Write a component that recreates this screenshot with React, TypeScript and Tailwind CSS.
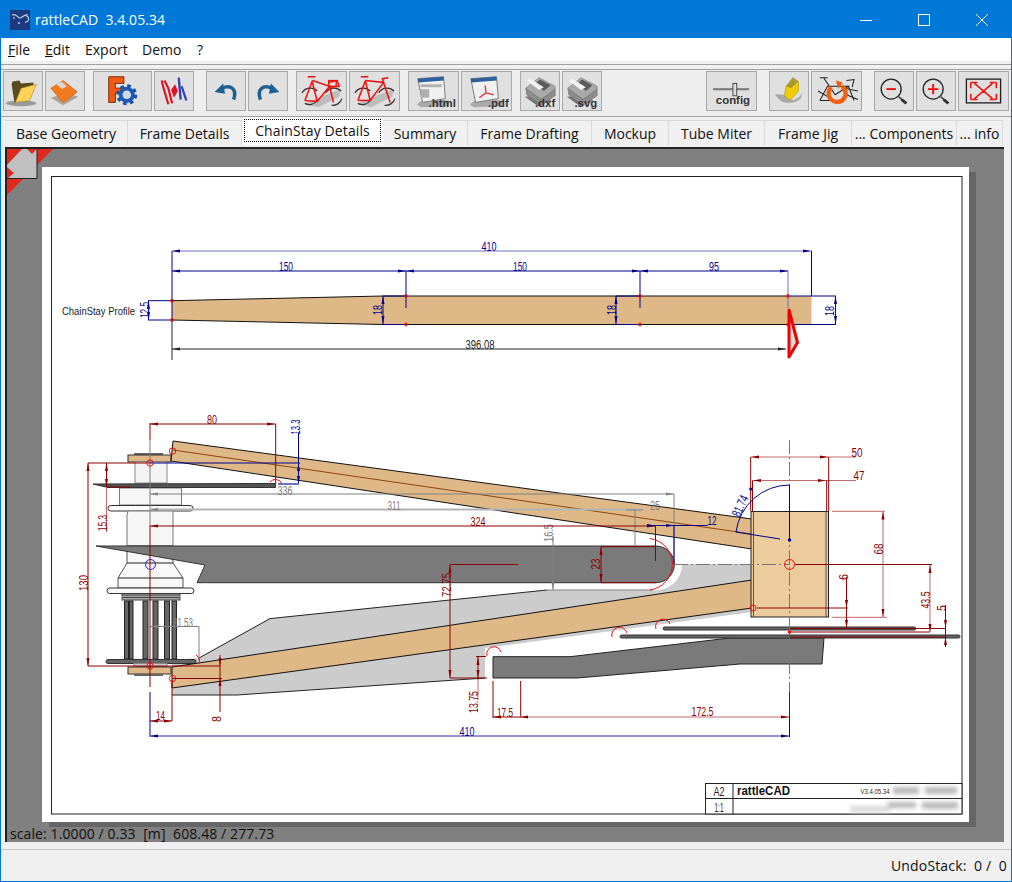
import React from 'react';

const NAVY = '#00008b';
const RED = '#8b0000';
const PALE = '#c06a6a';
const LILAC = '#7070c0';
const GRAY = '#808080';
const LIGHT = '#b4b4b4';
const TAN = '#deb887';
const DARK = '#7a7a7a';

// arrow head, tip at x,y, body running off in direction dx,dy
const ah = (x: number, y: number, dx: number, dy: number) => {
  const bx = x + dx * 8;
  const by = y + dy * 8;
  return `M${x} ${y}L${bx - dy * 1.5} ${by + dx * 1.5}L${bx + dy * 1.5} ${by - dx * 1.5}Z`;
};

function Ln({ d, c, w = 1 }: { d: string; c: string; w?: number }) {
  return <path d={d} stroke={c} strokeWidth={w} fill="none" />;
}

function Heads({ d, c }: { d: string; c: string }) {
  return <path d={d} fill={c} stroke="none" />;
}

function T({ x, y, w, c, rot, s = 13, children }: { x: number; y: number; w: number; c: string; rot?: number; s?: number; children: string }) {
  return (
    <text
      x={x}
      y={y}
      fill={c}
      fontSize={s}
      textAnchor="middle"
      dominantBaseline="central"
      textLength={w}
      lengthAdjust="spacingAndGlyphs"
      fontFamily="'Liberation Sans', sans-serif"
      transform={rot ? `rotate(${rot} ${x} ${y})` : undefined}
    >
      {children}
    </text>
  );
}

function Dot({ x, y, r = 2, c = '#f01010', fill = 'none' }: { x: number; y: number; r?: number; c?: string; fill?: string }) {
  return <circle cx={x} cy={y} r={r} stroke={c} strokeWidth={1} fill={fill} />;
}

function ProfileView() {
  return (
    <g>
      <polygon points="172,300.7 383,296 811.5,296 811.5,324.5 383,324.5 172,320" fill={TAN} />
      <Ln d="M172 300.7L383 296H788M172 320L383 324.5H788" c="#111" />
      <Ln d="M172 251H811.5" c={LILAC} />
      <Ln d="M172 251V320M172 271H788M811.5 251V296M406 271V308M640 271V308" c={NAVY} />
      <Ln d="M788 271V308" c={LILAC} />
      <Ln d="M383 296H406M383 324.5H406M383 296V324.5M616 296H640M616 324.5H640M616 296V324.5M788 296H836M788 324.5H836M835.5 296V324.5M148 300.7H172M148 320H172M148.5 300.7V320" c={NAVY} />
      <Heads
        c={NAVY}
        d={[
          ah(172, 251, 1, 0), ah(811, 251, -1, 0), ah(172, 271, 1, 0), ah(406, 271, -1, 0), ah(406, 271, 1, 0),
          ah(640, 271, -1, 0), ah(640, 271, 1, 0), ah(788, 271, -1, 0), ah(383, 296, 0, 1), ah(383, 324, 0, -1),
          ah(616, 296, 0, 1), ah(616, 324, 0, -1), ah(835.5, 296, 0, 1), ah(835.5, 324, 0, -1), ah(148.5, 301, 0, 1), ah(148.5, 320, 0, -1),
        ].join('')}
      />
      <Ln d="M172 320V360M172 349H786" c="#222" />
      <Heads c="#222" d={ah(172, 349, 1, 0) + ah(786, 349, -1, 0)} />
      <T x={489} y={246} w={15} c={NAVY}>410</T>
      <T x={286} y={266} w={14} c={NAVY}>150</T>
      <T x={520} y={266} w={14} c={NAVY}>150</T>
      <T x={714} y={266} w={10} c={NAVY}>95</T>
      <T x={480} y={344} w={29} c="#222">396.08</T>
      <T x={377} y={310} w={10} c={NAVY} rot={-90}>18</T>
      <T x={611} y={310} w={10} c={NAVY} rot={-90}>18</T>
      <T x={829} y={311} w={10} c={NAVY} rot={-90}>18</T>
      <T x={144} y={310} w={16} c={NAVY} rot={-90}>12.5</T>
      <T x={98.5} y={311} w={73} c="#222" s={11}>ChainStay  Profile</T>
      {[[172, 300.7], [172, 320], [406, 296], [406, 324.5], [640, 296], [640, 324.5], [788, 296], [788, 324.5]].map(([x, y]) => (
        <Dot key={`${x}-${y}`} x={x} y={y} r={1.5} />
      ))}
      <polygon points="789,310 797.5,342.5 789,357" fill="#dcdcdc" stroke="#f00000" strokeWidth={3} strokeLinejoin="round" />
    </g>
  );
}

function Hub() {
  return (
    <g stroke="#333" strokeWidth={1}>
      <rect x={134} y={453} width={29} height={2} fill="#666" stroke="none" />
      <rect x={128} y={455} width={43} height={7} fill={TAN} />
      <rect x={135} y={462} width={32} height={21} fill="#f4f4f4" stroke="#888" />
      <rect x={119.5} y={488} width={62} height={17} fill="#f6f6f6" stroke="#777" />
      <polygon points="93,484 275.5,483.5 275.5,487.5 108,487.5" fill="#555" />
      <rect x={108} y={505.5} width={85} height={5.5} rx={2.7} fill="#fafafa" />
      <polygon points="128,511 173,511 173,546 127,546 127,515" fill="#f6f6f6" stroke="#777" />
      <polygon points="127,546 173,546 173,563 183,578 183,588 118,588 118,578 127,563" fill="#f8f8f8" stroke="#555" />
      <path d="M127 563H173M118 578H183" fill="none" stroke="#222" />
      <rect x={107} y={588} width={87} height={5.5} rx={2.7} fill="#fafafa" />
      <rect x={122} y={594} width={58} height={2} fill="#aaa" stroke="#444" />
      <rect x={122} y={597.5} width={58} height={2.5} fill="#aaa" stroke="#444" />
      <rect x={124} y={601} width={53} height={58} fill="#fff" stroke="none" />
      {[[124.5, 4], [129.5, 3.5], [143, 5], [153, 5], [164.5, 5], [172, 4.5]].map(([x, w]) => (
        <rect key={x} x={x} y={601} width={w} height={58} fill="#666" stroke="#222" />
      ))}
      <rect x={106} y={659.5} width={90} height={4} rx={2} fill="#666" />
      <rect x={134} y={663.5} width={33} height={3} fill="#ccc" stroke="#888" />
      <rect x={128} y={667} width={43} height={7} fill={TAN} />
      <rect x={134} y={674} width={29} height={2} fill="#666" stroke="none" />
    </g>
  );
}

function AssemblyView() {
  return (
    <g>
      {/* dropout wedge */}
      <path d="M199 658L270 618.6L547 590H652A26 26 0 0 0 682 564H752V612L485 648V678L237 695H172V660Z" fill="#cccccc" />
      <Ln d="M199 658L270 618.6L547 590M172 695H237L485 678" c="#222" />
      <Ln d="M547 590H652" c={GRAY} />

      <Hub />

      {/* stays */}
      <polygon points="173,441 752,519 752,549 171,461" fill={TAN} stroke="#111" />
      <Ln d="M173 450L752 534" c="#8b4513" />
      <polygon points="172,667 752,580 752,608 172,688" fill={TAN} stroke="#111" />

      {/* slot and lower plate */}
      <path d="M96 546H656A18 18 0 0 1 656 582.7H197L205 565Z" fill={DARK} stroke="#333" />
      <polygon points="493,656.7 570,656.7 730,638 824,638 822,664 740,664 577,678 493,678" fill={DARK} stroke="#222" />
      <rect x={663} y={627} width={253} height={3} rx={1.5} fill="#666" stroke="#333" />
      <rect x={620} y={635} width={340} height={3} rx={1.5} fill="#666" stroke="#333" />

      {/* bottom bracket */}
      <rect x={751} y={511.5} width={77.5} height={105.5} fill="#eccc9c" stroke="#222" />
      <Ln d="M753.5 511.5V617M826 511.5V617" c="#555" />

      {/* center lines */}
      <Ln d="M150 440V526" c={GRAY} />
      <path d="M789.5 440V692M674 564.5H790" stroke="#777" fill="none" strokeDasharray="14 3 2 3" />

      {/* gray dimensions */}
      <Ln d="M150 494H674M674 494V564" c={GRAY} />
      <Ln d="M150 509.5H643" c={LIGHT} w={2} />
      <Ln d="M626 510H643M635 510V546M553 536V590M150 626.5H199M199 626.5V660" c={GRAY} />
      <Heads c={GRAY} d={ah(150, 494, 1, 0) + ah(674, 494, -1, 0) + ah(553, 590, 0, -1) + ah(150, 626.5, 1, 0) + ah(150, 509.5, 1, 0)} />
      <T x={285} y={490} w={15} c={GRAY}>336</T>
      <T x={394} y={505} w={13} c={GRAY}>311</T>
      <T x={655} y={505} w={10} c={GRAY}>25</T>
      <T x={548} y={533} w={18} c={GRAY} rot={-90}>16.5</T>
      <T x={183} y={622} w={20} c={GRAY}>81.53</T>

      {/* dark red dimensions */}
      <Ln d="M150 424H275.7M275.7 424V483M150 423V440M150 526H655M655.5 526V561M601 546.7H656M601 582.7H656M601 546.7V582.7M450 564.5V678M450 564.5H518M450 678H487" c={RED} />
      <Ln d="M150 526V687M88 463H150M88 666H220M88 463V666M106.5 463V487M106.5 487H130M220 655V712M172 678.5H222M172 680V721M150 721H172M478 656V680M476 656.5H486M493 681V718M520.7 681V718M493 717H520M789.5 692V717" c={RED} />
      <Ln d="M520 717H789" c={PALE} />
      <Ln d="M106.5 487V532M750.7 457H856M752.5 480.5H856M883 511.3V617.3M832 511.3H885M832 617.3H887M930 564.5V632" c={PALE} />
      <Ln d="M478 680V700" c={PALE} />
      <Ln d="M750.7 457V511M828.7 457V511M752.5 480.5V511M826.7 480.5V511M795 564.5H932M846.5 577V628M757 608H848M790 628.5H946M790 632H930M790 637H946M945.5 605V647" c={RED} />
      <Heads
        c={RED}
        d={[
          ah(150, 424, 1, 0), ah(275, 424, -1, 0), ah(150, 526, 1, 0), ah(655, 526, -1, 0), ah(601, 547, 0, 1), ah(601, 582, 0, -1),
          ah(450, 565, 0, 1), ah(450, 678, 0, -1), ah(88, 463, 0, 1), ah(88, 666, 0, -1), ah(106.5, 463, 0, 1), ah(106.5, 487, 0, -1),
          ah(220, 666, 0, -1), ah(220, 678, 0, 1), ah(150, 721, 1, 0), ah(172, 721, -1, 0), ah(478, 657, 0, 1), ah(478, 678, 0, -1),
          ah(493, 717, 1, 0), ah(520, 717, 1, 0), ah(789, 717, -1, 0), ah(751, 457, 1, 0), ah(828, 457, -1, 0), ah(753, 480.5, 1, 0),
          ah(826, 480.5, -1, 0), ah(883, 511.5, 0, 1), ah(883, 617, 0, -1), ah(930, 565, 0, 1), ah(930, 632, 0, -1), ah(846.5, 608, 0, -1),
          ah(846.5, 628, 0, -1), ah(945.5, 628, 0, -1), ah(945.5, 637, 0, 1),
        ].join('')}
      />
      <T x={212} y={419} w={10} c={RED}>80</T>
      <T x={478} y={521} w={15} c={RED}>324</T>
      <T x={595} y={564} w={11} c={RED} rot={-90}>23</T>
      <T x={446} y={585} w={24} c={RED} rot={-90}>72.75</T>
      <T x={473} y={702} w={22} c={RED} rot={-90}>13.75</T>
      <T x={505} y={712} w={16} c={RED}>17.5</T>
      <T x={702.5} y={711} w={22} c={RED}>172.5</T>
      <T x={83} y={583} w={16} c={RED} rot={-90}>130</T>
      <T x={102} y={523} w={16} c={RED} rot={-90}>15.3</T>
      <T x={216} y={719} w={6} c={RED} rot={-90}>8</T>
      <T x={160.5} y={715} w={9} c={RED}>14</T>
      <T x={857} y={452} w={11} c={RED}>50</T>
      <T x={859} y={475} w={11} c={RED}>47</T>
      <T x={878} y={549} w={11} c={RED} rot={-90}>68</T>
      <T x={925} y={600} w={17} c={RED} rot={-90}>43.5</T>
      <T x={843} y={577} w={6} c={RED} rot={-90}>6</T>
      <T x={941} y={608} w={6} c={RED} rot={-90}>5</T>

      {/* navy dimensions */}
      <Ln d="M150 463H300M298.5 433V484M647 525.5H708M674 525.5V564M789.5 485V540M735.7 532L780 539M736 532A54 54 0 0 1 789.5 485" c={NAVY} />
      <Ln d="M278 484H299" c={LILAC} w={2} />
      <Ln d="M150 692V737M789.5 717V737" c={NAVY} />
      <Ln d="M150 736H789" c={LILAC} w={1.5} />
      <Heads c={NAVY} d={ah(298.5, 463, 0, 1) + ah(298.5, 484, 0, -1) + ah(655, 525.5, -1, 0) + ah(674, 525.5, -1, 0) + ah(150, 736, 1, 0) + ah(789, 736, -1, 0)} />
      <circle cx={789.5} cy={540} r={1.8} fill={NAVY} />
      <circle cx={750.7} cy={489} r={1.5} fill={NAVY} />
      <T x={295} y={427} w={15} c={NAVY} rot={-90}>13.3</T>
      <T x={712} y={520} w={9} c={NAVY}>12</T>
      <T x={740} y={506} w={22} c={NAVY} rot={-65}>81.74</T>
      <T x={467} y={731} w={15} c={NAVY}>410</T>

      {/* reference points */}
      <Dot x={150} y={463} r={3.2} />
      <Dot x={150} y={666} r={3.2} />
      <Dot x={172.5} y={451} r={3.2} />
      <Dot x={172.5} y={678.5} r={3.2} />
      <Dot x={150.5} y={564.5} r={5} c="#2020e0" />
      <Dot x={789.5} y={564.5} r={5} />
      <Dot x={753} y={608} r={3} />
      <circle cx={789.5} cy={632} r={1.8} fill="#f01010" />
      <path
        d="M270 482A7 7 0 0 1 282 484M196 655A8 8 0 0 1 199 664M487 656A7 7 0 0 1 501 652M612 637A7 7 0 0 1 627 633M656 629A7 7 0 0 1 670 624M650 538.5A26 26 0 0 1 650 590"
        fill="none"
        stroke="#ee1010"
        strokeWidth={1}
      />
    </g>
  );
}

function TitleBlock() {
  return (
    <g>
      <rect x={705.5} y={783.5} width={256.5} height={30.5} fill="#fff" stroke="#222" />
      <Ln d="M705.5 798.5H962M733 783.5V814" c="#222" />
      <T x={719} y={791} w={11} c="#222">A2</T>
      <T x={719} y={807} w={9} c="#222">1:1</T>
      <text x={737} y={795} fontSize={12} fontWeight={700} fill="#111" textLength={53} lengthAdjust="spacingAndGlyphs" fontFamily="'Liberation Sans', sans-serif">
        rattleCAD
      </text>
      <T x={875} y={791} w={29} c="#222" s={8}>V3.4.05.34</T>
      <g className="blur-[2px]" fill="#b8b8b8">
        <rect x={893} y={787} width={26} height={7} />
        <rect x={925} y={787} width={32} height={7} />
        <rect x={850} y={806} width={40} height={6} fill="#d8d8d8" />
        <rect x={888} y={802} width={28} height={6} />
        <rect x={922} y={802} width={36} height={7} />
      </g>
    </g>
  );
}

function Sheet() {
  return (
    <svg viewBox="42 167 927 655" className="block h-[655px] w-[927px]">
      <rect x={51.5} y={176.5} width={910.5} height={637.5} fill="#fff" stroke="#222" />
      <ProfileView />
      <AssemblyView />
      <TitleBlock />
    </svg>
  );
}

function Label({ x, children }: { x: number; children: string }) {
  return (
    <text x={x} y={37} fontSize={12} fontWeight={700} fill="#333" textAnchor="end" fontFamily="'Liberation Sans', sans-serif">
      {children}
    </text>
  );
}

function BikeIcon({ sport }: { sport?: boolean }) {
  return (
    <svg viewBox="0 0 51 40" className="size-full">
      <polygon points="8,34 20,28 46,18 44,26 22,37" fill="#bdbdbd" />
      <path d="M5 22A10 10 0 0 1 21 20M21 30A10 10 0 0 1 8 33M30 22A10 10 0 0 1 46 20M47 28A10 10 0 0 1 36 35" fill="none" stroke="#333" strokeWidth={1.3} />
      <path
        d={sport ? 'M8 30L16 9M11 5H19M16 9L34 15L21 31L8 30M16 11L21 31M33 11L42 9L44 15L34 16M34 15L38 32' : 'M8 30L16 9M11 5H19M16 9L35 11L21 30L8 30M16 10L21 30M35 11L34 7L40 6M35 11L42 32'}
        stroke="#f01010"
        strokeWidth={1.6}
        fill="none"
      />
      {sport && <rect x={33} y={9} width={8} height={6} fill="none" stroke="#f01010" strokeWidth={1.4} />}
    </svg>
  );
}

function WindowIcon({ label, pdf }: { label: string; pdf?: boolean }) {
  return (
    <svg viewBox="0 0 51 40" className="size-full">
      <polygon points="8,34 17,27 42,30 42,36 12,37" fill="#aaa" />
      <polygon points="9,7 36,5 38,28 14,32" fill="#f0f0f0" stroke="#777" />
      <polygon points="9,7 36,5 36.3,9 9.4,11" fill="#2c5f9e" />
      {pdf ? (
        <path d="M24 14L25 22M25 22L18 27M25 22L33 24" stroke="#e04050" strokeWidth={1.5} fill="none" />
      ) : (
        <g fill="#b0b0b0">
          <rect x={12} y={13} width={22} height={3} />
          <rect x={12} y={18} width={9} height={9} />
        </g>
      )}
      <Label x={49}>{label}</Label>
    </svg>
  );
}

function PrinterIcon({ label }: { label: string }) {
  return (
    <svg viewBox="0 0 40 40" className="size-full">
      <polygon points="4,26 18,36 32,30 22,24" fill="#777" />
      <polygon points="5,17 21,29 36,18 36,25 21,35 6,24" fill="#8c8c8c" stroke="#666" strokeWidth={0.5} />
      <polygon points="5,17 19,6 36,15 36,18 21,29" fill="#a8a8a8" stroke="#666" strokeWidth={0.5} />
      <polygon points="15,12 20,8 31,14 24,20" fill="#5a5a5a" />
      <polygon points="6,9 10,7 24,16 19,19" fill="#f2f2f2" />
      <Label x={36}>{label}</Label>
    </svg>
  );
}

function Icon({ name }: { name: string }) {
  switch (name) {
    case 'open':
      return (
        <svg viewBox="0 0 40 40" className="size-full">
          <ellipse cx={18} cy={33} rx={16} ry={3} fill="#999" />
          <polygon points="8,13 9,10 16,9 18,12 31,11 31,16 12,32 11,32" fill="#5a4a20" />
          <polygon points="12,32 18,17 34,13 27,30" fill="#ffd257" stroke="#a08020" strokeWidth={0.6} />
        </svg>
      );
    case 'save':
      return (
        <svg viewBox="0 0 40 40" className="size-full">
          <polygon points="5,27 18,35 34,26 22,22" fill="#b0a090" />
          <polygon points="5,17 18,9 33,21 18,32" fill="#f47a20" stroke="#c85a10" strokeWidth={0.6} />
          <polygon points="11,13 16,10 22,15 17,18" fill="#d8d8d8" />
        </svg>
      );
    case 'settings':
      return (
        <svg viewBox="0 0 59 40" className="size-full">
          <path d="M15 5H31V12H22V17H28V22H22V32H15Z" fill="#ee5a10" stroke="#7a2a08" strokeWidth={1} />
          <circle cx={34} cy={24} r={9} fill="none" stroke="#1a4fa8" strokeWidth={4} strokeDasharray="3.6 3.5" />
          <circle cx={34} cy={24} r={6.5} fill="none" stroke="#1f58b8" strokeWidth={4} />
          <circle cx={34} cy={24} r={3.5} fill="#c8d8ee" />
        </svg>
      );
    case 'dims':
      return (
        <svg viewBox="0 0 40 40" className="size-full">
          <path d="M7 9L9 17L14 34M10 9L14 17L18 33" stroke="#e01020" strokeWidth={2.2} fill="none" />
          <polygon points="17,19 21,13 24,20 20,27" fill="#e01020" />
          <path d="M25 6L27 29" stroke="#3040b0" strokeWidth={2.4} fill="none" />
          <path d="M28 15L33 30" stroke="#3040b0" strokeWidth={2.4} fill="none" />
        </svg>
      );
    case 'undo':
      return (
        <svg viewBox="0 0 40 40" className="size-full">
          <path d="M16 17C25 13 32 18 28 29" stroke="#1f5f8f" strokeWidth={3.6} fill="none" />
          <polygon points="8,21 17,12 19,23" fill="#1f5f8f" />
        </svg>
      );
    case 'redo':
      return (
        <svg viewBox="0 0 40 40" className="size-full">
          <path d="M24 17C15 13 8 18 12 29" stroke="#1f5f8f" strokeWidth={3.6} fill="none" />
          <polygon points="32,21 23,12 21,23" fill="#1f5f8f" />
        </svg>
      );
    case 'bike1':
      return <BikeIcon sport />;
    case 'bike2':
      return <BikeIcon />;
    case 'html':
      return <WindowIcon label=".html" />;
    case 'pdf':
      return <WindowIcon label=".pdf" pdf />;
    case 'dxf':
      return <PrinterIcon label=".dxf" />;
    case 'svg':
      return <PrinterIcon label=".svg" />;
    case 'config':
      return (
        <svg viewBox="0 0 51 40" className="size-full">
          <path d="M6 18H44" stroke="#333" strokeWidth={1.2} />
          <path d="M6 19H44" stroke="#aaa" strokeWidth={1} />
          <rect x={27} y={12} width={4} height={13} fill="#ddd" stroke="#444" />
          <text x={27} y={34} textAnchor="middle" fontSize={12} fontWeight={700} fill="#333" fontFamily="'Liberation Sans', sans-serif">
            config
          </text>
        </svg>
      );
    case 'erase':
      return (
        <svg viewBox="0 0 40 40" className="size-full">
          <path d="M5 24C12 22 20 26 24 30C30 27 32 26 33 22C36 30 22 35 12 31Z" fill="#a8a8a8" />
          <polygon points="17,15 24,6 30,10 30,20 21,30 15,25" fill="#f2cc00" stroke="#9a8000" strokeWidth={0.5} />
          <polygon points="24,6 30,10 22,17 17,15" fill="#a89a30" />
        </svg>
      );
    case 'rebuild':
      return (
        <svg viewBox="0 0 51 40" className="size-full">
          <path d="M8 6H16M12 6L24 24M8 30L16 15H38L24 24M8 30H28M38 15L44 30M36 9L44 8L42 16M34 17L48 20M6 20L20 28M36 24L48 29" stroke="#222" strokeWidth={1.1} fill="none" />
          <path d="M20 16A9 9 0 1 0 31 15" stroke="#f06010" strokeWidth={4.5} fill="none" />
          <polygon points="25,9 32,11 27,18" fill="#f06010" />
        </svg>
      );
    case 'zoomout':
    case 'zoomin':
      return (
        <svg viewBox="0 0 40 40" className="size-full">
          <circle cx={17} cy={18} r={10.5} fill="none" stroke="#222" strokeWidth={1.4} />
          <path d="M25 26L33 33" stroke="#333" strokeWidth={1.6} />
          <path d="M28 29L33 33" stroke="#333" strokeWidth={3} />
          <path d={name === 'zoomin' ? 'M11.5 18H22.5M17 12.5V23.5' : 'M12 18H22'} stroke="#f01010" strokeWidth={2} />
        </svg>
      );
    default:
      return (
        <svg viewBox="0 0 51 40" className="size-full">
          <rect x={7.5} y={7.5} width={36} height={25} fill="none" stroke="#222" strokeWidth={1.4} />
          <path d="M16 12L35 28M35 12L16 28M12 11H19M12 11V17M39 11H32M39 11V17M12 29H19M12 29V23M39 29H32M39 29V23" stroke="#f01010" strokeWidth={1.6} fill="none" />
        </svg>
      );
  }
}

const toolGroups = [
  { cls: 'ml-[2px]', items: [['open', 'w-[40px]'], ['save', 'w-[40px]']] },
  { cls: 'ml-[8px]', items: [['settings', 'w-[59px]'], ['dims', 'w-[40px]']] },
  { cls: 'ml-[12px]', items: [['undo', 'w-[40px]'], ['redo', 'w-[40px]']] },
  { cls: 'ml-[8px]', items: [['bike1', 'w-[51px]'], ['bike2', 'w-[51px]']] },
  { cls: 'ml-[8px]', items: [['html', 'w-[51px]'], ['pdf', 'w-[51px]']] },
  { cls: 'ml-[8px]', items: [['dxf', 'w-[40px]'], ['svg', 'w-[40px]']] },
  { cls: 'ml-[104px]', items: [['config', 'w-[51px]']] },
  { cls: 'ml-[12px]', items: [['erase', 'w-[40px]'], ['rebuild', 'w-[51px]']] },
  { cls: 'ml-[12px]', items: [['zoomout', 'w-[40px]'], ['zoomin', 'w-[40px]'], ['fit', 'w-[51px]']] },
];

const tabs = [
  ['Base Geometry', 'w-[123px]'],
  ['Frame Details', 'w-[114px]'],
  ['ChainStay Details', 'w-[141px]'],
  ['Summary', 'w-[85px]'],
  ['Frame Drafting', 'w-[124px]'],
  ['Mockup', 'w-[77px]'],
  ['Tube Miter', 'w-[96px]'],
  ['Frame Jig', 'w-[87px]'],
  ['... Components', 'w-[105px]'],
  ['... info', 'w-[46px]'],
];

export default function App() {
  return (
    <div className="flex h-[882px] w-[1012px] flex-col overflow-hidden border border-[#0078d7] bg-[#f0f0f0] font-['Open_Sans','Liberation_Sans',sans-serif] text-[14px] text-[#111]">
      {/* Title bar */}
      <div className="flex h-[37px] shrink-0 items-center bg-[#0078d7] pl-[9px] text-white">
        <svg viewBox="0 0 20 20" className="size-[20px]">
          <rect width={20} height={20} fill="#1c3a80" />
          <path d="M2 5C6 3 8 8 10 8C12 8 14 4 18 5M4 7V9M16 6A3 3 0 1 1 15 12" stroke="#c4d0e0" strokeWidth={1.1} fill="none" />
          <circle cx={9} cy={13} r={1} fill="#c4d0e0" />
        </svg>
        <span className="ml-[5px] whitespace-pre text-[14px] tracking-[0.05px]">rattleCAD  3.4.05.34</span>
        <div className="ml-auto flex h-full">
          <div className="flex w-[58px] items-center justify-center">
            <svg viewBox="0 0 12 12" className="size-[12px]"><path d="M0 6.5H12" stroke="#fff" /></svg>
          </div>
          <div className="flex w-[58px] items-center justify-center">
            <svg viewBox="0 0 12 12" className="size-[12px]"><rect x={0.5} y={0.5} width={11} height={11} fill="none" stroke="#fff" /></svg>
          </div>
          <div className="flex w-[58px] items-center justify-center">
            <svg viewBox="0 0 12 12" className="size-[12px]"><path d="M0 0L12 12M12 0L0 12" stroke="#fff" /></svg>
          </div>
        </div>
      </div>

      {/* Menu */}
      <div className="flex h-[23px] shrink-0 items-center bg-white pl-[7px] text-[14px]">
        <span className="w-[37px]"><u>F</u>ile</span>
        <span className="w-[40px]"><u>E</u>dit</span>
        <span className="w-[57px]">Export</span>
        <span className="w-[55px]">Demo</span>
        <span>?</span>
      </div>
      <div className="h-[4px] shrink-0 border-b border-[#a0a0a0] bg-[#f0f0f0]" />
      <div className="h-[5px] shrink-0 border-b border-[#a0a0a0] bg-[#f0f0f0]" />

      {/* Toolbar */}
      <div className="flex h-[47px] shrink-0 items-start border-b border-[#a0a0a0] bg-[#eeeeee] pt-[1px]">
        {toolGroups.map((group, index) => (
          <div key={index} className={`flex gap-[2px] ${group.cls}`}>
            {group.items.map(([name, width]) => (
              <div key={name} className={`h-[40px] border border-[#a8a8a8] bg-[#e0e0e0] ${width}`}>
                <Icon name={name} />
              </div>
            ))}
          </div>
        ))}
      </div>

      {/* Tabs */}
      <div className="flex h-[30px] shrink-0 items-end bg-[#f0f0f0] pb-[2px] pl-[4px]">
        {tabs.map(([label, width]) =>
          label === 'ChainStay Details' ? (
            <div key={label} className={`flex h-[28px] items-center bg-white p-[2px] pb-[3px] ${width}`}>
              <div className="flex h-full w-full items-center justify-center border border-dotted border-black tracking-[0.1px]">{label}</div>
            </div>
          ) : (
            <div key={label} className={`flex h-[25px] items-center justify-center whitespace-nowrap border-r border-t border-[#d9d9d9] ${width}`}>
              {label}
            </div>
          ),
        )}
      </div>

      {/* Canvas */}
      <div className="relative ml-[4px] h-[695px] w-[999px] shrink-0 border-l-2 border-t-2 border-[#222] bg-[#808080] pt-[18px]">
        <svg viewBox="0 0 50 50" className="absolute left-0 top-0 h-[50px] w-[50px]">
          <polygon points="0,0 15,0 0,16" fill="#e0281c" />
          <polygon points="20,0 30,0 25,5" fill="#e0281c" />
          <polygon points="30,0 46,0 30,16" fill="#e0281c" />
          <polygon points="0,18 7,24 0,30" fill="#e0281c" />
          <polygon points="0,30 16,30 0,46" fill="#e0281c" />
          <polygon points="0,16 15,0 20,0 25,5 30,0 30,29 0,29 0,30 7,24 0,18" fill="#c0c0c0" />
          <path d="M30 0V29.5H0" stroke="#222" fill="none" />
        </svg>
        <div className="ml-[35px] w-[927px] bg-white shadow-[7px_5px_0_#666666]">
          <Sheet />
        </div>
        <div className="relative whitespace-pre pl-[3px] pt-[1px] tracking-[0.1px]">scale: 1.0000 / 0.33  [m]  608.48 / 277.73</div>
      </div>

      {/* Status bar */}
      <div className="h-[8px] shrink-0 border-b border-[#c8c8c8] bg-[#f0f0f0]" />
      <div className="flex h-[31px] shrink-0 items-center justify-end whitespace-pre pr-[4px] tracking-[0.15px]">UndoStack:  0 /  0</div>
    </div>
  );
}
